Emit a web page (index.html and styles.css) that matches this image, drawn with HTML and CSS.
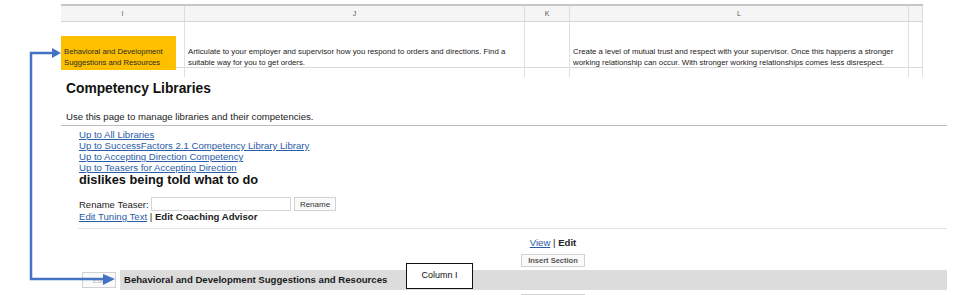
FILE: index.html
```html
<!DOCTYPE html>
<html>
<head>
<meta charset="utf-8">
<link rel="stylesheet" href="styles.css">
</head>
<body>
<div class="sheet">
  <div class="sheet-grid sheet-head">
    <div class="hcell">I</div>
    <div class="hcell">J</div>
    <div class="hcell">K</div>
    <div class="hcell">L</div>
    <div class="hcell"></div>
  </div>
  <div class="sheet-grid sheet-row">
    <div class="cell cell-i"><div class="highlight">Behavioral and Development<br>Suggestions and Resources</div></div>
    <div class="cell">Articulate to your employer and supervisor how you respond to orders and directions. Find a<br>suitable way for you to get orders.</div>
    <div class="cell"></div>
    <div class="cell">Create a level of mutual trust and respect with your supervisor. Once this happens a stronger<br>working relationship can occur. With stronger working relationships comes less disrespect.</div>
    <div class="cell"></div>
  </div>
  <div class="sheet-grid sheet-row sheet-row-empty">
    <div class="cell"></div><div class="cell"></div><div class="cell"></div><div class="cell"></div><div class="cell"></div>
  </div>
</div>

<div class="page">
  <div class="title">Competency Libraries</div>
  <div class="intro">Use this page to manage libraries and their competencies.</div>
  <div class="crumbs">
    <a href="#">Up to All Libraries</a>
    <a href="#">Up to SuccessFactors 2.1 Competency Library Library</a>
    <a href="#">Up to Accepting Direction Competency</a>
    <a href="#">Up to Teasers for Accepting Direction</a>
    <div class="teaser">dislikes being told what to do</div>
    <div class="rename-row">
      <span class="label">Rename Teaser:</span>
      <span class="input"></span>
      <span class="btn btn-rename">Rename</span>
    </div>
    <div class="edit-links"><a href="#">Edit Tuning Text</a> | <b>Edit Coaching Advisor</b></div>
  </div>
  <div class="editor">
    <div class="view-block">
      <div class="view-edit"><a href="#">View</a> | <b>Edit</b></div>
      <span class="btn btn-insert">Insert Section</span>
    </div>
    <div class="section-row">
      <span class="btn btn-edit">Edit</span>
      <div class="section-bar">Behavioral and Development Suggestions and Resources</div>
    </div>
    <div class="view-block">
      <span class="btn btn-insert btn-next"></span>
    </div>
  </div>
</div>

<div class="callout">Column I</div>

<svg class="arrow" width="974" height="295" viewBox="0 0 974 295">
  <polyline points="53,53 31,53 31,279 104,279" fill="none" stroke="#4472c4" stroke-width="2.5"/>
  <polygon points="52,48 61,53 52,58" fill="#4472c4"/>
  <polygon points="103,274 115,279 103,285" fill="#4472c4"/>
</svg>
</body>
</html>
```

FILE: styles.css
```css
html, body {
  margin: 0;
  padding: 0;
  background: #fff;
}
body {
  width: 974px;
  height: 295px;
  overflow: hidden;
  position: relative;
  font-family: "Liberation Sans", Arial, sans-serif;
  color: #111;
}

/* spreadsheet crop */
.sheet {
  margin: 4px 0 0 61px;
  width: 862px;
  border-top: 2px solid #c6c6c6;
}
.sheet-grid {
  display: grid;
  grid-template-columns: 124px 340px 45px 339px 14px;
}
.sheet-head {
  height: 15px;
  background: #f5f5f5;
  border-bottom: 1px solid #d4d4d4;
}
.hcell {
  border-right: 1px solid #dcdcdc;
  font-size: 7px;
  line-height: 15px;
  text-align: center;
  color: #555;
}
.sheet-row {
  height: 45px;
  border-bottom: 1px solid #dadada;
}
.sheet-row-empty {
  height: 9px;
  border-bottom: none;
}
.cell {
  border-right: 1px solid #e0e0e0;
  font-size: 7.8px;
  line-height: 11px;
  padding: 24px 0 0 3px;
  color: #222;
  white-space: nowrap;
  overflow: visible;
}
.sheet-row-empty .cell {
  padding: 0;
}
.cell-i {
  padding: 0;
  position: relative;
}
.highlight {
  position: relative;
  z-index: 1;
  margin-top: 14px;
  width: 112px;
  height: 24px;
  padding: 10px 0 0 3px;
  background: #fdbf00;
  font-size: 7.7px;
  line-height: 11px;
  color: #2a2a2a;
}

/* web page crop */
.page {
  margin-left: 61px;
  width: 886px;
}
.title {
  font-size: 13.8px;
  font-weight: bold;
  line-height: 16px;
  padding: 4px 0 0 5px;
}
.intro {
  margin-top: 14px;
  font-size: 9.6px;
  line-height: 12px;
  padding: 0 0 2px 5px;
  border-bottom: 1px solid #bdbdbd;
  color: #222;
}
.crumbs {
  padding: 3px 0 0 18px;
}
.crumbs a {
  display: block;
  font-size: 9.6px;
  line-height: 11px;
}
a {
  color: #2b5ca8;
  text-decoration: underline;
}
.teaser {
  font-size: 12.8px;
  font-weight: bold;
  line-height: 14px;
}
.rename-row {
  margin-top: 10px;
  display: flex;
  align-items: center;
  height: 14px;
  font-size: 9.5px;
  color: #222;
}
.label {
  width: 72px;
}
.input {
  width: 138px;
  height: 12px;
  border: 1px solid #d6d6d6;
  background: #fff;
}
.btn {
  display: inline-flex;
  align-items: center;
  justify-content: center;
  box-sizing: border-box;
  border: 1px solid #d2d2d2;
  background: #fafafa;
  font-size: 8px;
  color: #333;
}
.btn-rename {
  margin-left: 3px;
  width: 42px;
  height: 14px;
}
.edit-links {
  font-size: 9.6px;
  line-height: 10px;
  color: #222;
}
.edit-links a {
  display: inline;
}
.editor {
  margin: 6px 0 0 17px;
  border-top: 1px solid #e4e4e4;
}
.view-block {
  display: flex;
  flex-direction: column;
  align-items: center;
  width: 100px;
  margin-left: 425px;
}
.view-edit {
  margin-top: 8px;
  font-size: 9.6px;
  line-height: 12px;
  color: #222;
}
.btn-insert {
  margin-top: 5px;
  width: 64px;
  height: 13px;
  font-size: 7.5px;
  font-weight: bold;
  color: #555;
}
.btn-next {
  margin-top: 4px;
}
.section-row {
  margin-top: 3px;
  display: flex;
  align-items: center;
  height: 20px;
}
.btn-edit {
  margin-left: 4px;
  width: 34px;
  height: 16px;
  color: #bbb;
  font-size: 7.5px;
}
.section-bar {
  margin-left: 4px;
  width: 823px;
  height: 20px;
  padding-left: 4px;
  background: #dcdcdc;
  font-size: 9.6px;
  font-weight: bold;
  line-height: 20px;
  color: #1a1a1a;
}

/* annotations */
.callout {
  position: absolute;
  left: 406px;
  top: 263px;
  width: 65px;
  height: 24px;
  border: 1px solid #111;
  background: #fff;
  font-size: 9px;
  line-height: 22px;
  text-align: center;
  color: #111;
}
.arrow {
  position: absolute;
  left: 0;
  top: 0;
  pointer-events: none;
}
```
